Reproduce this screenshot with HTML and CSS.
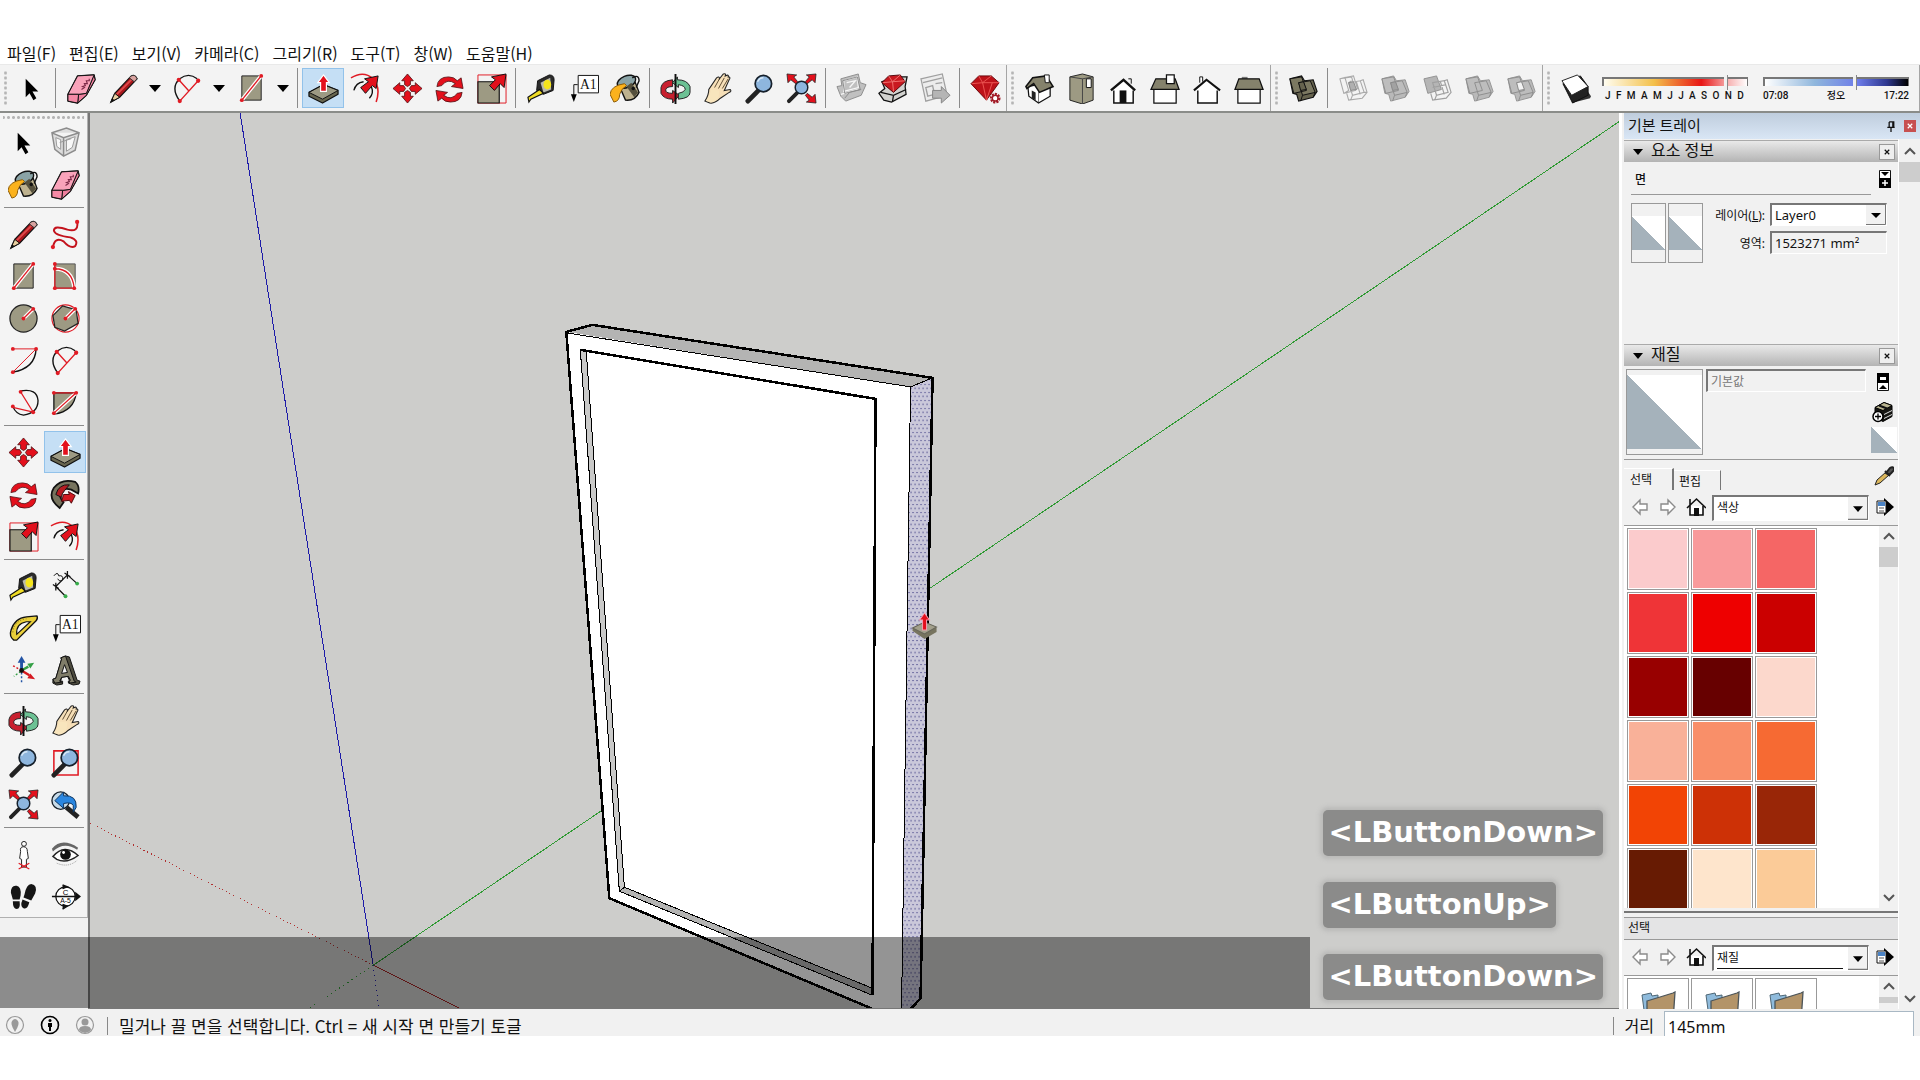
FILE: index.html
```
<!DOCTYPE html>
<html lang="ko">
<head>
  <meta charset="UTF-8">
  <meta name="viewport" content="width=device-width, initial-scale=1.0">
  <title>SketchUp</title>
  <link rel="stylesheet" href="styles.css">
</head>
<body>
  <!-- Shared icons -->
  <svg class="defs" width="0" height="0" aria-hidden="true">
    <defs>
      <pattern id="dots" width="4" height="8" patternUnits="userSpaceOnUse">
        <rect width="4" height="8" fill="#cac8da"/>
        <rect x="0" y="0" width="1" height="1" fill="#1d1b6e"/>
        <rect x="2" y="4" width="1" height="1" fill="#1d1b6e"/>
      </pattern>
      <symbol id="select" viewBox="0 0 32 32"><path d="M10 6v19l4-4 4 7 3-2-4-7h6z" fill="#000"/></symbol>
      <symbol id="eraser" viewBox="0 0 32 32">
        <path d="M2 22 12 3l17-1 1 5-9 16-9 8-10-2z" fill="#f7c0d0" stroke="#111" stroke-width="1.4" stroke-linejoin="round"/>
        <path d="M29 2l1 5-9 16-9 8 1-9 8-1z" fill="#ee7f9d" stroke="#111" stroke-linejoin="round"/>
        <path d="M12 3l17-1-8 19-8 1-11 0z" fill="#f9a3ba" stroke="#111" stroke-linejoin="round"/>
        <path d="M2 22h11l-1 9-10-2z" fill="#f58aa6" stroke="#111" stroke-linejoin="round"/>
        <path d="M16 17l3-2-2-1 3-1-1-2 3 0-1-3 3 0 0-2" fill="none" stroke="#7d2a48" stroke-width="1.2"/>
      </symbol>
      <symbol id="pencil" viewBox="0 0 32 32">
        <path d="M3 30 7 21 24 3q4-2 6 3L12 25z" fill="#a8171c" stroke="#111" stroke-width="1.2"/>
        <path d="M9 22 25 6" stroke="#df4a4c" stroke-width="2"/>
        <path d="M3 30 7 21l5 4z" fill="#e9cfa0" stroke="#111"/><path d="M3 30l1-4 3 2z" fill="#111"/>
        <path d="M24 3q4-2 6 3l-3 3-5-4z" fill="#d9a3a0" stroke="#333"/>
      </symbol>
      <symbol id="arc2" viewBox="0 0 32 32">
        <path d="M8 29Q-2 15 8 6q9-7 18 0" fill="none" stroke="#111" stroke-width="1.4"/>
        <path d="M7 7l10 11M8 29 27 8" stroke="#e01b24" stroke-width="1.4"/>
        <g fill="#e01b24"><circle cx="7" cy="7" r="2.2"/><circle cx="27" cy="8" r="2.2"/><circle cx="8" cy="29" r="2.2"/></g>
      </symbol>
      <symbol id="rect" viewBox="0 0 32 32">
        <path d="M6 3h20v25H6z" fill="#9d9a83" stroke="#222"/>
        <path d="M6 28 26 3" stroke="#fff" stroke-width="4"/><path d="M6 28 26 3" stroke="#e01b24" stroke-width="1.4"/>
        <g fill="#e01b24"><circle cx="26" cy="3" r="2"/><circle cx="6" cy="28" r="2"/></g>
      </symbol>
      <symbol id="pushpull" viewBox="0 0 32 32">
        <path d="M1 20v4l14 7 16-9v-4L16 12z" fill="#68664f" stroke="#111" stroke-width="1.3" stroke-linejoin="round"/>
        <path d="M1 20 16 12l15 6-16 9z" fill="#9d9a83" stroke="#111"/>
        <path d="M16 2l6 8h-3v9h-6v-9h-3z" fill="#e3101c" stroke="#fff" stroke-width="1.2"/>
      </symbol>
      <symbol id="offset" viewBox="0 0 32 32">
        <path d="M1 5Q14-3 24 6q8 9 3 24" fill="none" stroke="#e01b24" stroke-width="1.6"/>
        <path d="M4 18q2-8 10-9M20 26q5-5 2-12" fill="none" stroke="#111" stroke-width="1.4"/>
        <path d="M29 3l-2 13-4-3-7 8-5-6 8-6-4-3z" fill="#e3101c" stroke="#111"/>
      </symbol>
      <symbol id="move" viewBox="0 0 32 32">
        <path id="mv" d="M16 1l6 7h-3v4l-3 2-3-2V8h-3z" fill="#e3101c" stroke="#4a0c10" stroke-width=".8"/>
        <use href="#mv" transform="rotate(90 16 16)"/><use href="#mv" transform="rotate(180 16 16)"/><use href="#mv" transform="rotate(270 16 16)"/>
      </symbol>
      <symbol id="rotate" viewBox="0 0 32 32">
        <path id="rt" d="M3 14Q4 4 15 4q6 0 9 4l4-3 2 11-12-2 4-3q-8-6-14 2z" fill="#e3101c" stroke="#4a0c10" stroke-width=".8"/>
        <use href="#rt" transform="rotate(180 16 17)"/>
      </symbol>
      <symbol id="scale" viewBox="0 0 32 32">
        <path d="M2 2h29v29H2z" fill="none" stroke="#e01b24"/>
        <path d="M2 9h22v22H2z" fill="#9d9a83" stroke="#111" stroke-width="1.2"/>
        <path d="M31 1l-2 14-4-4-6 7-5-5 6-6-4-3z" fill="#e3101c" stroke="#111"/>
      </symbol>
      <symbol id="tape" viewBox="0 0 32 32">
        <path d="M12 8 24 2q5 0 5 5l-1 11-10 4-7-4z" fill="#2b2b2b" stroke="#111"/>
        <path d="M15 10 25 5l1 12-8 3z" fill="#b9b9ae"/><ellipse cx="22" cy="12" rx="4" ry="5" fill="#f5e51c"/>
        <path d="M14 17 2 25l1 5 2-3 13-6z" fill="#f0dc24" stroke="#111" stroke-width="1.2"/>
      </symbol>
      <symbol id="text" viewBox="0 0 32 32">
        <path d="M10.500 2.500h21v18h-21z" fill="#fff" stroke="#111"/><path d="M10 12H6v11" fill="none" stroke="#111"/><path d="M3 22h6l-3 8z" fill="#000"/>
        <text x="21" y="16" font-family="Liberation Serif, serif" font-size="14" text-anchor="middle" fill="#111">A1</text>
      </symbol>
      <symbol id="bucket" viewBox="0 0 32 32">
        <path d="M9 12 25 7l5 13q-4 9-14 8z" fill="#beb28f" stroke="#111" stroke-width="1.4"/>
        <ellipse cx="17" cy="9" rx="10" ry="6" transform="rotate(-22 17 9)" fill="#8aa3a6" stroke="#111" stroke-width="1.5"/>
        <path d="M23 5q7-4 7 3l-3 7" fill="none" stroke="#111" stroke-width="1.4"/>
        <path d="M22 10l7 10-4 5-8-11z" fill="#55503d"/><circle cx="24" cy="16" r="1.800" fill="#111"/>
        <path d="M15 11Q1 13 0 22l4 8q6-1 6-8 1-5 7-9z" fill="#fbb21d" stroke="#8a5a05"/>
      </symbol>
      <symbol id="orbit" viewBox="0 0 32 32">
        <path d="M13 7Q2 8 1 15v6q3 6 12 6v4l7-8-7-5v3q-8 0-7-4 1-3 7-3z" fill="#c8202f" stroke="#222"/>
        <path d="M19 27q12-1 12-7v-6Q28 7 18 7V4l-5 6 6 5v-3q7 1 7 5-1 3-7 4z" fill="#6cc194" stroke="#222"/>
        <path d="M16 1v31" stroke="#111" stroke-width="2"/>
      </symbol>
      <symbol id="hand" viewBox="0 0 32 32">
        <path d="M3 29q4-6 4-12l8-12q3-2 3 1l4-5q3-1 2 2 4-2 3 1 3 0 1 3l-5 11 6-1q2 2-1 3l-9 6q-6 6-11 5z" fill="#f6dfb8" stroke="#222" stroke-width="1.1"/>
        <path d="M13 15l5-9M17 16l6-11M21 16l6-10" stroke="#4b3a22" stroke-width=".9"/><path d="M4 29q5-7 5-12l9 1-1 7q-3 5-8 5z" fill="#f8e5bd"/>
      </symbol>
      <symbol id="zoom" viewBox="0 0 32 32">
        <path d="M4 29l10-10" stroke="#222" stroke-width="5" stroke-linecap="round"/>
        <circle cx="20" cy="11" r="8.500" fill="#8eb6de" stroke="#16202b" stroke-width="1.800"/><path d="M14 9q2-4 6-4" stroke="#d8e8f6" stroke-width="1.5" fill="none"/>
      </symbol>
      <symbol id="extents" viewBox="0 0 32 32">
        <path d="M3 29l9-9" stroke="#222" stroke-width="4" stroke-linecap="round"/>
        <circle cx="16" cy="15" r="6.500" fill="#8eb6de" stroke="#16202b" stroke-width="1.5"/>
        <path d="M1 1l10 1-3 2 4 5-2 2-5-4-3 3zM31 1l-10 1 3 2-4 5 2 2 5-4 3 3zM31 31l-10-1 3-2-4-5 2-2 5 4 3-3z" fill="#e3101c" stroke="#222" stroke-width=".8"/>
      </symbol>
      <symbol id="warehouse" viewBox="0 0 32 32">
        <path d="M1 14l5-1-1-7 18-5 2 9 6 2-5 11-16 6-5-5z" fill="#c0c0c0" stroke="#8d8d8d"/>
        <path d="M8 8l14-4 1 11-15 4zM5 22l18-5M11 10l9-2-6 7" fill="none" stroke="#f6f6f6" stroke-width="1.300"/><path d="M7 8l15-4 3 13-16 4zM9 26l5-6 12-3" fill="none" stroke="#8a8a8a"/>
      </symbol>
      <symbol id="rubybox" viewBox="0 0 32 32">
        <path d="M1 21l6-5-3-7 18-5 8 0-2 10 1 8-15 8-8-2z" fill="#d2d2cf" stroke="#111" stroke-width="1.3"/>
        <path d="M3 20l13 3 13-6M16 23l-1 6" stroke="#111" fill="none" stroke-width="1.300"/>
        <path d="M4 10l7-7 12-1 5 7-12 11z" fill="#c91920" stroke="#53080c"/><path d="M5 10l10-1 13-1M11 3l4 6 8-7M15 9l1 10" fill="none" stroke="#f0736f"/>
      </symbol>
      <symbol id="share" viewBox="0 0 32 32">
        <path d="M1 6l22-5 5 22-22 6z" fill="#ececec" stroke="#a0a0a0" stroke-width="1.3"/><path d="M3 10l20-5M6 15l7-2 2 9-7 2zM16 11l7-1" fill="none" stroke="#a0a0a0" stroke-width="1.400"/>
        <path d="M13 18h9v-4l9 9-9 8v-5h-9z" fill="#b5b5b5" stroke="#858585"/>
      </symbol>
      <symbol id="ruby" viewBox="0 0 32 32">
        <path d="M1 11 9 3h13l8 7-13 18z" fill="#bd1219" stroke="#6b070b"/><path d="M2 11l11-1 17 0M9 3l4 7 9-7M13 10l4 18 6-18" fill="none" stroke="#ec5653"/>
        <circle cx="26" cy="26" r="4" fill="#fff" stroke="#a21b27" stroke-width="3" stroke-dasharray="2 1"/><circle cx="26" cy="26" r="3" fill="none" stroke="#a21b27" stroke-width="1.500"/>
      </symbol>
      <symbol id="iso" viewBox="0 0 32 32">
        <path d="M4 14l10-2 13-1v13l-12 7-10-7z" fill="#fff" stroke="#111" stroke-width="1.3"/><path d="M15 19v11" stroke="#777"/>
        <path d="M2 14 9 5l14-2 7 11-14 6-6-9-7 5z" fill="#85826c" stroke="#111" stroke-width="1.600"/><path d="M8 18l4 2v8l-4-2z" fill="#222"/><path d="M21 2h5v8h-4z" fill="#fff" stroke="#111"/>
      </symbol>
      <symbol id="top" viewBox="0 0 32 32">
        <path d="M4 4l13-3 11 3v24l-11 4L4 28z" fill="#9d9a83" stroke="#222"/><path d="M17 6v26M4 4l13 2 11-2" stroke="#444" fill="none"/><path d="M21 6h5v9h-5z" fill="#fff" stroke="#111"/>
      </symbol>
      <symbol id="front" viewBox="0 0 32 32"><path d="M6 16v15h20V16" fill="#fff" stroke="#111" stroke-width="1.500"/><path d="M21 6h3v5" fill="none" stroke="#111"/><path d="M3 18 16 7l12 11" fill="#fff" stroke="#111" stroke-width="2.500"/><path d="M12 18h7v13h-7z" fill="#111"/></symbol>
      <symbol id="right" viewBox="0 0 32 32"><path d="M4 16h23v15H4z" fill="#fff" stroke="#111" stroke-width="1.300"/><path d="M6 6h20l4 11H1z" fill="#85826c" stroke="#111" stroke-width="1.300"/><path d="M17 2h8v9h-8z" fill="#fff" stroke="#111" stroke-width="1.300"/></symbol>
      <symbol id="back" viewBox="0 0 32 32"><path d="M6 16v15h20V16" fill="#fff" stroke="#111" stroke-width="1.500"/><path d="M8 10V4h3v5" fill="#fff" stroke="#111"/><path d="M2 18 15 7l14 11" fill="#fff" stroke="#111" stroke-width="2.200"/></symbol>
      <symbol id="left" viewBox="0 0 32 32"><path d="M4 16h23v15H4z" fill="#fff" stroke="#111" stroke-width="1.300"/><path d="M8 4h6v3H8z" fill="#777"/><path d="M5 6h21l4 11H1z" fill="#85826c" stroke="#111" stroke-width="1.300"/></symbol>
      <symbol id="solid" viewBox="0 0 32 32">
        <path d="M2 6l12-3 3 5 9-1 4 12-4 6-15 4-2-7-4-1z" fill="#66634e" stroke="#111" stroke-width="1.200"/>
        <path d="M2 6l12-2 5 14-13 3zM11 10l12-2 5 12-13 3zM15 23l-2 6M28 20l-2 5" fill="#7b7861" stroke="#111"/><path d="M11 10l5-1 3 8-6 1z" fill="#66634e" stroke="#111"/>
      </symbol>
      <symbol id="shell" viewBox="0 0 32 32">
        <path d="M2 6l12-3 3 5 9-1 4 12-4 6-15 4-2-7-4-1z" fill="#b9b9b9" stroke="#969696"/>
        <path d="M2 6l12-2 5 14-13 3zM11 10l12-2 5 12-13 3zM15 23l-2 6M28 20l-2 5" fill="#bdbdbd" stroke="#8d8d8d"/>
      </symbol>
      <symbol id="union" viewBox="0 0 32 32"><use href="#shell"/><path d="M11 10l5-1 3 8-6 1z" fill="#a2a2a2" stroke="#8a8a8a"/></symbol>
      <symbol id="trim" viewBox="0 0 32 32"><use href="#shell"/><path d="M11 10l5-1 3 8-6 1z" fill="#f3f3f3" stroke="#8a8a8a"/></symbol>
      <symbol id="wire" viewBox="0 0 32 32"><path d="M2 6l12-2 4 14-12 3zM2 6l4-1 10-2 4 13-2 2M7 4l4 14-5 3M11 10l12-2 4 12-12 3zM11 10l3-2M23 8l3-1 4 13-5 6-14 2-2-7M27 20l3 0M15 23l-2 5M19 9l4 13" fill="none" stroke="#a9a9a9" stroke-width="1.100"/><path d="M11 10l5-1 3 8-6 1z" fill="#b0b0b0" stroke="#888"/></symbol>
      <symbol id="subtract" viewBox="0 0 32 32"><path d="M2 6l13-3 5 14-14 4z" fill="#b5b5b5" stroke="#929292"/><path d="M11 10l12-2 4 12-12 3zM23 8l3-1 4 13-5 6-14 2-2-7M15 23l-2 5M19 9l4 13M11 15l14-3" fill="none" stroke="#a0a0a0" stroke-width="1.200"/></symbol>
      <symbol id="shadow" viewBox="0 0 32 32"><path d="M12 31l19-5 1-2-4-6z" fill="#333"/><path d="M3 11l18-8 8 11v9L13 31z" fill="#222" stroke="#111"/><path d="M2 8 18 2l11 12-17 9z" fill="#fff" stroke="#222"/></symbol>
      <symbol id="component" viewBox="0 0 32 32"><path d="M2 6l15-5 13 5-4 18-12 6-9-7zM2 6l12 5 16-5M14 11v19" fill="#ddd" stroke="#8c8c8c" stroke-width="1.500"/><path d="M6 11l5 2v10l-4-3zM17 13l9-3-3 11-6 4zM10 16l12-4" fill="#f8f8f8" stroke="#999"/></symbol>
      <symbol id="freehand" viewBox="0 0 32 32"><path d="M3 29Q5 18 14 23q7 8 12 5 4-6-5-9-16-2-17-7 0-6 14-1 12 3 10-8" fill="none" stroke="#c3121c" stroke-width="2"/><circle cx="3" cy="29" r="2.200" fill="#e01b24"/><circle cx="28" cy="3" r="2.200" fill="#e01b24"/></symbol>
      <symbol id="rotrect" viewBox="0 0 32 32"><path d="M5 3h21v25H5z" fill="#9d9a83" stroke="#555"/><path d="M5 8q18 0 20 20" fill="none" stroke="#fff" stroke-width="4"/><path d="M5 3v25h20Q23 8 5 8" fill="none" stroke="#e01b24" stroke-width="1.300"/><g fill="#e01b24"><circle cx="5" cy="3" r="2"/><circle cx="5" cy="8" r="2"/><circle cx="5" cy="28" r="2"/><circle cx="25" cy="28" r="2"/></g></symbol>
      <symbol id="circle" viewBox="0 0 32 32"><circle cx="16" cy="16" r="14" fill="#9d9a83" stroke="#222" stroke-width="1.300"/><path d="M16 16l10-10" stroke="#fff" stroke-width="4"/><path d="M16 16l10-10" stroke="#e01b24" stroke-width="1.300"/><g fill="#e01b24"><circle cx="16" cy="16" r="2"/><circle cx="26" cy="6" r="2"/></g></symbol>
      <symbol id="polygon" viewBox="0 0 32 32"><circle cx="16" cy="16" r="14" fill="#fff" stroke="#e01b24" stroke-width="1.200"/><path d="M3 13 13 3l14 4 2 14-14 8-10-4z" fill="#9d9a83" stroke="#222" stroke-width="1.300"/><path d="M16 16l10-10" stroke="#fff" stroke-width="4"/><path d="M16 16l10-10" stroke="#e01b24" stroke-width="1.300"/><g fill="#e01b24"><circle cx="16" cy="16" r="2"/><circle cx="26" cy="6" r="2"/></g></symbol>
      <symbol id="arc" viewBox="0 0 32 32"><path d="M29 4q-1 20-24 24" fill="none" stroke="#111" stroke-width="1.400"/><path d="M5 28 29 4H5" fill="none" stroke="#e01b24"/><g fill="#e01b24"><circle cx="5" cy="4" r="2"/><circle cx="29" cy="4" r="2"/><circle cx="5" cy="28" r="2"/></g></symbol>
      <symbol id="arc3" viewBox="0 0 32 32"><path d="M13 4q17-3 18 10 0 13-15 15-8-1-11-9" fill="none" stroke="#111" stroke-width="1.400"/><path d="M13 5l13 21-21-5" fill="none" stroke="#e01b24" stroke-width="1.200"/><g fill="#e01b24"><circle cx="13" cy="5" r="2"/><circle cx="26" cy="26" r="2"/><circle cx="5" cy="20" r="2"/></g></symbol>
      <symbol id="pie" viewBox="0 0 32 32"><path d="M4 6h23q-2 19-23 22z" fill="#9d9a83" stroke="#111" stroke-width="1.300"/><path d="M4 27 27 6" stroke="#fff" stroke-width="4"/><path d="M4 27 27 6H4" fill="none" stroke="#e01b24" stroke-width="1.300"/><g fill="#e01b24"><circle cx="4" cy="6" r="2"/><circle cx="27" cy="6" r="2"/><circle cx="4" cy="27" r="2"/></g></symbol>
      <symbol id="followme" viewBox="0 0 32 32"><path d="M10 30Q-3 20 4 9 12-1 26 3q5 4 3 12l-7-4Q13 8 10 15q0 5 4 9z" fill="#77745f" stroke="#111" stroke-width="1.800"/><path d="M6 16Q9 5 20 6l-5 6q-3 3-3 7z" fill="#b51c22" stroke="#111"/><path d="M12 23l2-7 6 0-1-3 7 4-4 8-2-3z" fill="#d01a22" stroke="#51070a"/></symbol>
      <symbol id="dimension" viewBox="0 0 32 32"><path d="M6 16 18 4M6 16l10 10M18 4l10 9M3 14l6 4M6 12v8M15 2l6 4M18 0v8" stroke="#111" stroke-width="1.300"/><path d="M4 5q4-5 5 0 5-1 4 4-3 3-5-1" fill="none" stroke="#111"/><circle cx="16" cy="26" r="2" fill="#38ad4b"/><circle cx="28" cy="13" r="2" fill="#38ad4b"/></symbol>
      <symbol id="protractor" viewBox="0 0 32 32">
        <path d="M6 28Q1 24 3 18 7 5 19 4l11-1q1 3-1 5L9 28z" fill="#e9cf3a" stroke="#111" stroke-width="1.400" stroke-linejoin="round"/>
        <path d="M9 22q-1-11 10-13l4 0z" fill="#f6f6f6" stroke="#111" stroke-width="1.200"/><path d="M5 20q1-12 14-14" fill="none" stroke="#7a6a12" stroke-dasharray="1 2"/>
      </symbol>
      <symbol id="axes" viewBox="0 0 32 32"><path d="M14 16V6" stroke="#2253a5" stroke-width="3"/><path d="M14 1l4 7h-8z" fill="#2253a5"/><path d="M14 16l7-4" stroke="#34a046" stroke-width="2.500"/><path d="M27 8l-7 1 3 5z" fill="#34a046"/><path d="M14 16l8 5" stroke="#d51820" stroke-width="2.500"/><path d="M28 25l-8-1 3-5z" fill="#d51820"/><path d="M14 18v10" stroke="#2253a5" stroke-width="1.500" stroke-dasharray="2 2"/><path d="M14 16 5 11" stroke="#d51820" stroke-width="1.500" stroke-dasharray="2 2"/><path d="M13 17l-7 5" stroke="#34a046" stroke-width="1.500" stroke-dasharray="2 2"/><circle cx="14" cy="16" r="2.500" fill="#111"/></symbol>
      <symbol id="text3d" viewBox="0 0 32 32">
        <path d="M3 25l3-1L12 4l-1-1 5-2 4 1 8 24 3 1-1 3-6 1-5-2v-2l1-1-2-4-6 1-1 4 2 0v3l-6 1-4-2z" fill="#4d4b3e" stroke="#111"/>
        <path d="M3 25l3-1L12 4l-1-1 5-2 9 26 2 1-7 1v-2l1-1-2-4-7 1-2 4 2 1-7 1z" fill="#807d69" stroke="#111"/><path d="M12 19l3-9 3 8z" fill="#eee" stroke="#111"/>
      </symbol>
      <symbol id="window" viewBox="0 0 32 32"><path d="M4 4h25v25H4z" fill="none" stroke="#e01b24" stroke-width="1.600"/><use href="#zoom"/></symbol>
      <symbol id="previous" viewBox="0 0 32 32"><path d="M17 19l12 10" stroke="#222" stroke-width="5"/><circle cx="11" cy="12" r="9" fill="#c7dbe9" stroke="#16202b" stroke-width="1.400"/><path d="M5 12 14 3v4q14-1 13 12l-3 5 0-7q-2-4-10-2v5z" fill="#2a86e0" stroke="#10355e"/></symbol>
      <symbol id="camera" viewBox="0 0 32 32"><path d="M13 13q-1-5 3-5t4 5l1 7-2 1v8h-5v-8l-2-1z" fill="#fff" stroke="#222"/><circle cx="16.500" cy="5" r="2.500" fill="#fff" stroke="#222"/><path d="M11 25l11 6M22 25l-11 6" stroke="#e01b24" stroke-width="1.300"/></symbol>
      <symbol id="look" viewBox="0 0 32 32"><path d="M2 10Q12-2 29 9l-1 2Q14 2 3 13z" fill="#666"/><path d="M3 18q12-14 26-1-12 9-22 4z" fill="#fff" stroke="#222" stroke-width="1.500"/><circle cx="16" cy="16" r="5.500" fill="#111"/><circle cx="14" cy="14" r="1.500" fill="#fff"/><path d="M7 25q12 5 21-3" fill="none" stroke="#999" stroke-dasharray="1 1"/></symbol>
      <symbol id="walk" viewBox="0 0 32 32"><g fill="#151515"><path d="M3 12q0-8 6-7 5 1 4 10l-1 4-7 0zM5 21l7 0q1 8-3 8t-4-8z"/><path d="M17 14q2-11 7-11 7 1 4 10l-4 7-8-3zM15 19l7 3q-2 8-6 6t-1-9z"/></g></symbol>
      <symbol id="section" viewBox="0 0 32 32"><circle cx="16" cy="16" r="10" fill="#fff" stroke="#111" stroke-width="1.300"/><path d="M2 16h28M13 4l5 2-5 2M13 24l5 2-5 3" stroke="#111" stroke-width="1.300" fill="#111"/><path d="M26 11l6 5-6 5z" fill="#111"/><text x="16" y="14" font-family="Liberation Sans, sans-serif" font-size="8" text-anchor="middle">C</text><text x="16" y="23" font-family="Liberation Sans, sans-serif" font-size="7" text-anchor="middle">A-5</text></symbol>
      <symbol id="prev" viewBox="0 0 20 20"><path d="M3 10l7-7v4h7v6h-7v4z" fill="#fff" stroke="#8b8b8b" stroke-width="1.400"/></symbol>
      <symbol id="next" viewBox="0 0 20 20"><path d="M17 10l-7-7v4H3v6h7v4z" fill="#fff" stroke="#8b8b8b" stroke-width="1.400"/></symbol>
      <symbol id="home" viewBox="0 0 20 20"><path d="M4 9v9h13V9" fill="#fff" stroke="#111" stroke-width="1.600"/><path d="M4 9V2M1 11 10.500 2 20 11" fill="none" stroke="#111" stroke-width="1.600"/><path d="M8 11h5v8H8z" fill="#111"/></symbol>
      <symbol id="details" viewBox="0 0 20 20"><path d="M9 1l10 9-10 9z" fill="#000"/><path d="M2 4h9v12H2z" fill="#fff" stroke="#111"/><path d="M3 5h7v4H3z" fill="#4b83c5"/><path d="M4 11h5M4 14h5" stroke="#555"/></symbol>
      <symbol id="up" viewBox="0 0 12 8"><path d="M1 7l5-5 5 5" fill="none" stroke="#555" stroke-width="2"/></symbol>
      <symbol id="down" viewBox="0 0 12 8"><path d="M1 1l5 5 5-5" fill="none" stroke="#555" stroke-width="2"/></symbol>
      <symbol id="caret" viewBox="0 0 12 7"><path d="M0 0h12L6 7z" fill="#000"/></symbol>
      <symbol id="close" viewBox="0 0 8 8"><path d="M1 1l6 6M7 1 1 7" stroke="currentColor" stroke-width="1.600"/></symbol>
      <symbol id="folder" viewBox="0 0 36 36"><path d="M1 4l9-2 1 3 6-1v30H5z" fill="#8fbbdc" stroke="#4d6675"/><path d="M6 10 32 2l2-1-2 30-26 4z" fill="#b39469" stroke="#4c555a" stroke-width="1.300"/></symbol>
    </defs>
  </svg>

  <nav class="menubar" aria-label="메뉴">
    <button>파일(F)</button>
    <button>편집(E)</button>
    <button>보기(V)</button>
    <button>카메라(C)</button>
    <button>그리기(R)</button>
    <button>도구(T)</button>
    <button>창(W)</button>
    <button>도움말(H)</button>
  </nav>

  <div class="toolbar">
    <div class="group">
      <span class="grip"></span>
      <button class="tool" aria-label="선택"><svg><use href="#select"/></svg></button>
      <span class="sep"></span>
      <button class="tool" aria-label="지우개"><svg><use href="#eraser"/></svg></button>
      <button class="tool" aria-label="선"><svg><use href="#pencil"/></svg></button>
      <button class="more" aria-label="선 도구"><svg><use href="#caret"/></svg></button>
      <button class="tool" aria-label="2점 호"><svg><use href="#arc2"/></svg></button>
      <button class="more" aria-label="호 도구"><svg><use href="#caret"/></svg></button>
      <button class="tool" aria-label="직사각형"><svg><use href="#rect"/></svg></button>
      <button class="more" aria-label="도형 도구"><svg><use href="#caret"/></svg></button>
      <span class="sep"></span>
      <button class="tool active" aria-label="밀기/끌기"><svg><use href="#pushpull"/></svg></button>
      <button class="tool" aria-label="오프셋"><svg><use href="#offset"/></svg></button>
      <button class="tool" aria-label="이동"><svg><use href="#move"/></svg></button>
      <button class="tool" aria-label="회전"><svg><use href="#rotate"/></svg></button>
      <button class="tool" aria-label="배율"><svg><use href="#scale"/></svg></button>
      <span class="sep"></span>
      <button class="tool" aria-label="줄자"><svg><use href="#tape"/></svg></button>
      <button class="tool" aria-label="텍스트"><svg><use href="#text"/></svg></button>
      <button class="tool" aria-label="페인트통"><svg><use href="#bucket"/></svg></button>
      <span class="sep"></span>
      <button class="tool" aria-label="궤도"><svg><use href="#orbit"/></svg></button>
      <button class="tool" aria-label="팬"><svg><use href="#hand"/></svg></button>
      <button class="tool" aria-label="확대/축소"><svg><use href="#zoom"/></svg></button>
      <button class="tool" aria-label="범위 확대"><svg><use href="#extents"/></svg></button>
      <span class="sep"></span>
      <button class="tool" aria-label="모델 가져오기"><svg><use href="#warehouse"/></svg></button>
      <button class="tool" aria-label="3D Warehouse"><svg><use href="#rubybox"/></svg></button>
      <button class="tool" aria-label="모델 공유"><svg><use href="#share"/></svg></button>
      <span class="sep"></span>
      <button class="tool" aria-label="확장 프로그램"><svg><use href="#ruby"/></svg></button>
    </div>
    <div class="group">
      <span class="grip"></span>
      <button class="tool" aria-label="등각"><svg><use href="#iso"/></svg></button>
      <button class="tool" aria-label="평면"><svg><use href="#top"/></svg></button>
      <button class="tool" aria-label="정면"><svg><use href="#front"/></svg></button>
      <button class="tool" aria-label="우측"><svg><use href="#right"/></svg></button>
      <button class="tool" aria-label="후면"><svg><use href="#back"/></svg></button>
      <button class="tool" aria-label="좌측"><svg><use href="#left"/></svg></button>
    </div>
    <div class="group">
      <span class="grip"></span>
      <button class="tool" aria-label="외부 쉘"><svg><use href="#solid"/></svg></button>
      <span class="sep"></span>
      <button class="tool" aria-label="교차"><svg><use href="#wire"/></svg></button>
      <button class="tool" aria-label="결합"><svg><use href="#union"/></svg></button>
      <button class="tool" aria-label="빼기"><svg><use href="#subtract"/></svg></button>
      <button class="tool" aria-label="자르기"><svg><use href="#shell"/></svg></button>
      <button class="tool" aria-label="분할"><svg><use href="#trim"/></svg></button>
    </div>
    <div class="group grow">
      <span class="grip"></span>
      <button class="tool" aria-label="그림자"><svg><use href="#shadow"/></svg></button>
      <div class="slider">
        <input type="range" class="months" aria-label="날짜" min="0" max="100" value="86">
        <div class="scale letters"><span>J</span><span>F</span><span>M</span><span>A</span><span>M</span><span>J</span><span>J</span><span>A</span><span>S</span><span>O</span><span>N</span><span>D</span></div>
      </div>
      <div class="slider">
        <input type="range" class="hours" aria-label="시간" min="0" max="100" value="63">
        <div class="scale"><span>07:08</span><span>정오</span><span>17:22</span></div>
      </div>
    </div>
  </div>

  <main>
    <aside class="palette">
      <div class="palette-box">
        <span class="grip-h"></span>
        <div class="tools">
          <button class="tool" aria-label="선택"><svg><use href="#select"/></svg></button>
          <button class="tool" aria-label="구성요소"><svg><use href="#component"/></svg></button>
          <button class="tool" aria-label="페인트통"><svg><use href="#bucket"/></svg></button>
          <button class="tool" aria-label="지우개"><svg><use href="#eraser"/></svg></button>
        </div>
        <div class="tools">
          <button class="tool" aria-label="선"><svg><use href="#pencil"/></svg></button>
          <button class="tool" aria-label="자유곡선"><svg><use href="#freehand"/></svg></button>
          <button class="tool" aria-label="직사각형"><svg><use href="#rect"/></svg></button>
          <button class="tool" aria-label="회전 직사각형"><svg><use href="#rotrect"/></svg></button>
          <button class="tool" aria-label="원"><svg><use href="#circle"/></svg></button>
          <button class="tool" aria-label="다각형"><svg><use href="#polygon"/></svg></button>
          <button class="tool" aria-label="호"><svg><use href="#arc"/></svg></button>
          <button class="tool" aria-label="2점 호"><svg><use href="#arc2"/></svg></button>
          <button class="tool" aria-label="3점 호"><svg><use href="#arc3"/></svg></button>
          <button class="tool" aria-label="파이"><svg><use href="#pie"/></svg></button>
        </div>
        <div class="tools">
          <button class="tool" aria-label="이동"><svg><use href="#move"/></svg></button>
          <button class="tool active" aria-label="밀기/끌기"><svg><use href="#pushpull"/></svg></button>
          <button class="tool" aria-label="회전"><svg><use href="#rotate"/></svg></button>
          <button class="tool" aria-label="따라가기"><svg><use href="#followme"/></svg></button>
          <button class="tool" aria-label="배율"><svg><use href="#scale"/></svg></button>
          <button class="tool" aria-label="오프셋"><svg><use href="#offset"/></svg></button>
        </div>
        <div class="tools">
          <button class="tool" aria-label="줄자"><svg><use href="#tape"/></svg></button>
          <button class="tool" aria-label="치수"><svg><use href="#dimension"/></svg></button>
          <button class="tool" aria-label="각도기"><svg><use href="#protractor"/></svg></button>
          <button class="tool" aria-label="텍스트"><svg><use href="#text"/></svg></button>
          <button class="tool" aria-label="축"><svg><use href="#axes"/></svg></button>
          <button class="tool" aria-label="3D 텍스트"><svg><use href="#text3d"/></svg></button>
        </div>
        <div class="tools">
          <button class="tool" aria-label="궤도"><svg><use href="#orbit"/></svg></button>
          <button class="tool" aria-label="팬"><svg><use href="#hand"/></svg></button>
          <button class="tool" aria-label="확대/축소"><svg><use href="#zoom"/></svg></button>
          <button class="tool" aria-label="창 확대"><svg><use href="#window"/></svg></button>
          <button class="tool" aria-label="범위 확대"><svg><use href="#extents"/></svg></button>
          <button class="tool" aria-label="이전"><svg><use href="#previous"/></svg></button>
        </div>
        <div class="tools">
          <button class="tool" aria-label="카메라 배치"><svg><use href="#camera"/></svg></button>
          <button class="tool" aria-label="둘러보기"><svg><use href="#look"/></svg></button>
          <button class="tool" aria-label="이동 보기"><svg><use href="#walk"/></svg></button>
          <button class="tool" aria-label="단면"><svg><use href="#section"/></svg></button>
        </div>
      </div>
    </aside>

    <section class="viewport">
      <svg class="scene" viewBox="90 113 1528 895" preserveAspectRatio="xMidYMid slice" shape-rendering="crispEdges">
        <!-- Axes -->
        <g fill="none" stroke-width="1">
          <path d="M240 113 373 965" stroke="#1d1aa8"/>
          <path d="M373 965 1618 122" stroke="#2f9a33"/>
          <path d="M373 965l88 44" stroke="#a32626"/>
          <path d="M90 823 373 965" stroke="#b03030" stroke-dasharray="1 3"/>
          <path d="M373 965l-65 44" stroke="#2f9a33" stroke-dasharray="1 4"/>
          <path d="M373 965l6 44" stroke="#2320a8" stroke-dasharray="1 4"/>
        </g>
        <!-- Door frame -->
        <path d="M566 332 910 387 901 1020H902L609 898z" fill="#fff"/>
        <path d="M566 332 592 325 932 378 910 387z" fill="#b4b4b3"/>
        <path d="M910 387 932 378 920 998 908 1012H901z" fill="url(#dots)"/>
        <path d="M580 350 586 352 624 887 619 891z" fill="#c9c9c8"/>
        <path d="M624 887 872 988V995L619 891z" fill="#b4b4b3"/>
        <g fill="none" stroke="#000" stroke-width="1">
          <path d="M566 333 910 387 901 1010M910 387l22-9M580 350l39 541M586 352l38 535M619 891l5-4 248 101M619 891l253 104"/>
        </g>
        <g fill="none" stroke="#000" stroke-width="2.500" stroke-linejoin="round">
          <path d="M873 1009 609 898 566 332l26-7L932 378l-12 620-10 11M580 350 875 399 872 995"/>
        </g>
        <!-- Push/pull cursor -->
        <g shape-rendering="auto">
          <path d="M912 628v3l12 8 12-7v-4l-12-5z" fill="#77745f"/>
          <path d="M912 628l12-6 12 5-12 7z" fill="#a3a08c" stroke="#68665a"/>
          <path d="M924 613l5 7h-3v10h-4v-10h-3z" fill="#e3101c" stroke="#f0a0b0"/>
        </g>
      </svg>
      <div class="keys">
        <kbd>&lt;LButtonDown&gt;</kbd>
        <kbd>&lt;LButtonUp&gt;</kbd>
        <kbd>&lt;LButtonDown&gt;</kbd>
      </div>
    </section>

    <aside class="tray">
      <header class="tray-title">
        <h1>기본 트레이</h1>
        <button class="pin" aria-label="고정"><svg viewBox="0 0 10 12"><path d="M3 1h5v6M3 1v6M1 7h8M5 7v5M7 1v6" stroke="#111" stroke-width="1.400" fill="none"/></svg></button>
        <button class="tray-close" aria-label="트레이 닫기"><svg><use href="#close"/></svg></button>
      </header>
      <div class="tray-body">
        <div class="panels">
          <header class="panel-head">
            <svg><use href="#caret"/></svg>
            <h2>요소 정보</h2>
            <button aria-label="요소 정보 닫기"><svg><use href="#close"/></svg></button>
          </header>
          <div class="entity">
            <div class="entity-top">
              <strong>면</strong>
              <svg viewBox="0 0 12 18"><path d="M.5.5h11v17H.5z" fill="#fff" stroke="#111"/><path d="M2 2h8L6 6zM0 8h12v10H0z" fill="#000"/><path d="M3 13h6M6 10v6" stroke="#fff" stroke-width="1.500"/></svg>
            </div>
            <div class="entity-row">
              <span class="face"></span>
              <span class="face"></span>
              <div class="fields">
                <label for="layer">레이어(<u>L</u>):</label>
                <select id="layer"><option>Layer0</option></select>
                <label for="area">영역:</label>
                <input id="area" type="text" value="1523271 mm²" readonly>
              </div>
            </div>
          </div>

          <header class="panel-head">
            <svg><use href="#caret"/></svg>
            <h2>재질</h2>
            <button aria-label="재질 닫기"><svg><use href="#close"/></svg></button>
          </header>
          <div class="material">
            <span class="preview"></span>
            <input type="text" aria-label="재질 이름" value="기본값" disabled>
            <div class="material-tools">
              <svg class="collapse" viewBox="0 0 12 18"><path d="M.5.5h11v17H.5z" fill="#fff" stroke="#111"/><path d="M0 0h12v10H0zM2 16h8l-4-4z" fill="#000"/><path d="M3 4h6v3H3z" fill="#fff"/></svg>
              <button aria-label="재질 만들기"><svg viewBox="0 0 22 22"><path d="M4 7l9-5 8 3v11l-9 5-8-4z" fill="#171713" stroke="#000"/><path d="M4 7l9-5 8 3-9 5z" fill="#b9b490" stroke="#000"/><path d="M13 14l8-4M13 18l8-4" stroke="#ddd"/><path d="M8 5l8 3" stroke="#111" stroke-width="2"/><circle cx="7" cy="16" r="5" fill="#fff" stroke="#000" stroke-width="1.500"/><path d="M4 16h6M7 13v6" stroke="#000" stroke-width="1.300"/></svg></button>
              <span class="mini"></span>
            </div>
          </div>
          <div class="tabs" role="tablist">
            <button role="tab" aria-selected="true">선택</button>
            <button role="tab" aria-selected="false">편집</button>
            <svg viewBox="0 0 20 20"><path d="M1 19l2-5L12 6l3 3-9 8z" fill="#dcb75c" stroke="#222"/><path d="M11 5l5 5M12 7l4-5q3-2 4 1 0 2-5 6z" stroke="#222" stroke-width="2" fill="#555"/></svg>
          </div>
          <div class="nav">
            <button aria-label="이전"><svg><use href="#prev"/></svg></button>
            <button aria-label="다음"><svg><use href="#next"/></svg></button>
            <button aria-label="홈"><svg><use href="#home"/></svg></button>
            <select aria-label="재질 목록"><option>색상</option></select>
            <button aria-label="세부정보"><svg><use href="#details"/></svg></button>
          </div>
          <div class="list colors">
            <div class="grid">
              <button class="swatch c1" aria-label="색상 1"></button>
              <button class="swatch c2" aria-label="색상 2"></button>
              <button class="swatch c3" aria-label="색상 3"></button>
              <button class="swatch c4" aria-label="색상 4"></button>
              <button class="swatch c5" aria-label="색상 5"></button>
              <button class="swatch c6" aria-label="색상 6"></button>
              <button class="swatch c7" aria-label="색상 7"></button>
              <button class="swatch c8" aria-label="색상 8"></button>
              <button class="swatch c9" aria-label="색상 9"></button>
              <button class="swatch c10" aria-label="색상 10"></button>
              <button class="swatch c11" aria-label="색상 11"></button>
              <button class="swatch c12" aria-label="색상 12"></button>
              <button class="swatch c13" aria-label="색상 13"></button>
              <button class="swatch c14" aria-label="색상 14"></button>
              <button class="swatch c15" aria-label="색상 15"></button>
              <button class="swatch c16" aria-label="색상 16"></button>
              <button class="swatch c17" aria-label="색상 17"></button>
              <button class="swatch c18" aria-label="색상 18"></button>
            </div>
            <div class="scroll"><svg><use href="#up"/></svg><span></span><svg><use href="#down"/></svg></div>
          </div>
          <div class="splitter"></div>
          <h3>선택</h3>
          <div class="nav">
            <button aria-label="이전"><svg><use href="#prev"/></svg></button>
            <button aria-label="다음"><svg><use href="#next"/></svg></button>
            <button aria-label="홈"><svg><use href="#home"/></svg></button>
            <select class="lined" aria-label="재질 폴더"><option>재질</option></select>
            <button aria-label="세부정보"><svg><use href="#details"/></svg></button>
          </div>
          <div class="list folders">
            <div class="grid">
              <button class="swatch" aria-label="폴더 1"><svg><use href="#folder"/></svg></button>
              <button class="swatch" aria-label="폴더 2"><svg><use href="#folder"/></svg></button>
              <button class="swatch" aria-label="폴더 3"><svg><use href="#folder"/></svg></button>
            </div>
            <div class="scroll"><svg><use href="#up"/></svg><span></span></div>
          </div>
        </div>
        <div class="scroll outer"><svg><use href="#up"/></svg><span></span><svg><use href="#down"/></svg></div>
      </div>
    </aside>

    <div class="shade"></div>
  </main>

  <footer class="status">
    <button aria-label="위치"><svg viewBox="0 0 20 20"><circle cx="10" cy="10" r="8.500" fill="none" stroke="#999" stroke-width="1.200"/><path d="M10 17Q5 9 7 6q3-4 6 0 2 3-3 11z" fill="#999"/></svg></button>
    <button aria-label="크레딧"><svg viewBox="0 0 20 20"><circle cx="10" cy="10" r="8.500" fill="none" stroke="#000" stroke-width="1.600"/><circle cx="10" cy="5.500" r="1.500"/><path d="M8 8h4v4h-1v4H9v-4H8z"/></svg></button>
    <button aria-label="로그인"><svg viewBox="0 0 20 20"><circle cx="10" cy="10" r="8.500" fill="none" stroke="#999" stroke-width="1.200"/><circle cx="10" cy="7" r="3.500" fill="#999"/><path d="M4 15q0-4 6-4t6 4q-6 6-12 0z" fill="#999"/></svg></button>
    <p>밀거나 끌 면을 선택합니다. Ctrl = 새 시작 면 만들기 토글</p>
    <label for="distance">거리</label>
    <input id="distance" type="text" value="145mm">
  </footer>
</body>
</html>
```
FILE: styles.css
```
* {
  box-sizing: border-box;
}
html,
body {
  height: 100%;
}
body {
  margin: 0;
  padding: 40px 0 44px;
  display: flex;
  flex-direction: column;
  overflow: hidden;
  background: #fff;
  color: #111;
  font-family: "Noto Sans", "Noto Sans CJK KR", sans-serif;
  font-size: 13px;
}
h1,
h2,
h3,
p {
  margin: 0;
  font-weight: normal;
}
button {
  margin: 0;
  padding: 0;
  border: 0;
  background: none;
  color: inherit;
  font: inherit;
}
svg {
  display: block;
}
.defs {
  position: absolute;
}

/* Menu */
.menubar {
  flex: none;
  height: 24px;
  padding: 2px 7px 0;
  display: flex;
  align-items: center;
  gap: 13px;
  font-family: "Noto Sans CJK KR", sans-serif;
  font-size: 16px;
  line-height: 20px;
}

/* Toolbar */
.toolbar {
  flex: none;
  display: flex;
  background: #f3f3f3;
  border-top: 1px solid #e9e9e9;
  border-bottom: 2px solid #8a8c89;
}
.group {
  display: flex;
  padding: 3px 0;
  border-right: 1px solid #a5a5a5;
}
.grow {
  flex: 1;
}
.grip {
  width: 11px;
  margin: 2px 0;
  background: radial-gradient(circle, #b5b5b5 1px, transparent 2px) center / 5px 5px repeat-y;
}
.group:first-child .grip {
  width: 10px;
}
.tool {
  width: 42px;
  height: 40px;
  display: flex;
  align-items: center;
  justify-content: center;
  border: 1px solid transparent;
}
.tool svg {
  width: 31px;
  height: 31px;
}
.tool.active {
  background: #c5dff5;
  border-color: #92c2ea;
}
.more {
  width: 22px;
  padding-left: 5px;
}
.more svg {
  width: 12px;
  height: 7px;
}
.sep {
  width: 8px;
  border-left: 3px solid transparent;
  background: linear-gradient(#8b8b8b, #8b8b8b) left / 1px 100% no-repeat;
}
.slider {
  flex: 1;
  max-width: 146px;
  margin: 9px 0 0 6px;
}
.slider + .slider {
  margin-left: 15px;
}
.slider input {
  appearance: none;
  display: block;
  width: 100%;
  height: 9px;
  margin: 0 0 4px;
  border: solid #777;
  border-width: 2px 1px 0 2px;
}
.slider input::-webkit-slider-thumb {
  appearance: none;
  width: 4px;
  height: 15px;
  background: #f1f1f1;
  border-right: 1px solid #888;
}
.months {
  background: linear-gradient(90deg, #fffdf0, #f3c04a 35%, #e81616 68%, #f7b8b8 88%, #fff);
}
.hours {
  background: linear-gradient(90deg, #fff, #8fb6dc 35%, #6c7be8 65%, #2e3890 85%, #000);
}
.scale {
  display: flex;
  justify-content: space-between;
  font-family: Roboto, "Noto Sans CJK KR", sans-serif;
  font-size: 10px;
  font-weight: 500;
  line-height: 12px;
}
.letters {
  padding: 0 4px 0 3px;
}

/* Work area */
main {
  flex: 1;
  min-height: 0;
  display: flex;
  position: relative;
}
.palette {
  flex: none;
  width: 88px;
  background: #f1f1f1;
}
.palette-box {
  background: #f4f4f4;
  border: solid #b0b0b0;
  border-width: 0 1px 1px 0;
}
.grip-h {
  display: block;
  height: 8px;
  margin: 0 3px;
  background: radial-gradient(circle, #b5b5b5 1px, transparent 2px) center / 5px 5px repeat-x;
}
.tools {
  display: flex;
  flex-wrap: wrap;
  padding-left: 2px;
}
.tools .tool {
  height: 42px;
}
.tools + .tools {
  margin-top: 2px;
  padding-top: 6px;
  background: linear-gradient(#8b8b8b, #8b8b8b) center top / 80px 1px no-repeat;
}
.viewport {
  flex: 1;
  min-width: 0;
  position: relative;
  background: #cdcdcb;
  border: solid #777;
  border-width: 0 0 1px 2px;
}
.scene {
  width: 100%;
  height: 100%;
}
.keys {
  position: absolute;
  right: 16px;
  bottom: 8px;
  display: flex;
  flex-direction: column;
  align-items: flex-start;
  gap: 26px;
}
.keys kbd {
  padding: 0 5px 2px;
  border-radius: 5px;
  background: #8b8b8a;
  box-shadow: 0 0 4px 3px rgba(150, 150, 150, .35);
  color: #fff;
  font: bold 29px/44px "DejaVu Sans", sans-serif;
}
.shade {
  position: absolute;
  left: 0;
  right: 610px;
  bottom: 1px;
  height: 71px;
  background: rgba(0, 0, 0, .42);
}

/* Tray */
.tray {
  flex: none;
  width: 301px;
  display: flex;
  flex-direction: column;
  padding-left: 2px;
  border-left: 3px solid #fff;
  background: #f1f1f1;
}
.tray-title {
  flex: none;
  height: 26px;
  padding: 0 4px;
  display: flex;
  align-items: center;
  background: linear-gradient(#bfcddd, #d9e6f5);
}
.tray-title h1 {
  flex: 1;
  font-size: 15px;
  line-height: 22px;
  padding-bottom: 2px;
}
.pin svg {
  width: 10px;
  height: 11px;
}
.tray-close {
  width: 12px;
  height: 12px;
  margin-left: 8px;
  padding: 3px;
  background: #c75050;
  color: #fff;
}
.tray-close svg {
  width: 6px;
  height: 6px;
}
.tray-body {
  flex: 1;
  min-height: 0;
  display: flex;
}
.panels {
  flex: 1;
  min-width: 0;
  padding-top: 1px;
  display: flex;
  flex-direction: column;
  border-right: 1px solid #fff;
}
.panel-head {
  flex: none;
  height: 22px;
  padding: 0 3px 0 9px;
  display: flex;
  align-items: center;
  gap: 8px;
  background: linear-gradient(#e9e9e9, #b4b4b4);
  border-top: 1px solid #aaa;
}
.panel-head > svg {
  width: 10px;
  height: 8px;
}
.panel-head h2 {
  flex: 1;
  padding-bottom: 2px;
  font-size: 16px;
  line-height: 19px;
}
.panel-head button {
  width: 16px;
  height: 16px;
  padding: 4px;
  border: 1px solid #999;
  background: #eee;
}
.panel-head button svg {
  width: 6px;
  height: 6px;
}
.entity {
  flex: none;
  height: 182px;
  padding: 0 11px 0 7px;
}
.entity-top {
  height: 33px;
  margin-right: -4px;
  padding: 0 0 0 4px;
  display: flex;
  align-items: center;
  justify-content: space-between;
  background: linear-gradient(#999, #999) left bottom / 240px 1px no-repeat;
}
.entity-top strong {
  font-size: 12px;
  font-weight: 500;
}
.entity-top svg {
  width: 12px;
  height: 18px;
}
.entity-row {
  padding-top: 8px;
  display: flex;
  gap: 2px;
}
.face {
  flex: none;
  width: 35px;
  height: 60px;
  padding: 12px 0;
  border: 1px solid #999;
  background: linear-gradient(45deg, #a5b2bb 50%, #fff 50%) content-box;
}
.fields {
  flex: 1;
  min-width: 0;
  display: grid;
  grid-template-columns: 1fr 117px;
  column-gap: 5px;
  row-gap: 5px;
  align-content: start;
  align-items: center;
  text-align: right;
  white-space: nowrap;
  font-size: 12px;
}
select,
input[type="text"] {
  appearance: none;
  min-width: 0;
  height: 23px;
  margin: 0;
  padding: 0 3px;
  border: solid;
  border-width: 2px 1px 1px 2px;
  border-color: #777 #fff #fff #777;
  border-radius: 0;
  background: #f1f1f1;
  color: #111;
  font: 13px/18px "Noto Sans", "Noto Sans CJK KR", sans-serif;
}
select {
  background: #fff url("data:image/svg+xml,%3Csvg xmlns='http://www.w3.org/2000/svg' width='20' height='20'%3E%3Cpath d='M0 0h20v20H0z' fill='%23f1f1f1'/%3E%3Cpath d='M0 19.500h19.500V0' fill='none' stroke='%23777'/%3E%3Cpath d='M5 8h10l-5 5z'/%3E%3C/svg%3E") right center / 20px 100% no-repeat;
}
.material {
  flex: none;
  display: flex;
  align-items: flex-start;
  gap: 3px;
  padding: 3px 1px 4px 2px;
  border-bottom: 1px solid #999;
}
.preview {
  flex: none;
  width: 77px;
  height: 86px;
  padding: 5px 0;
  border: 1px solid #999;
  background: linear-gradient(45deg, #a5b2bb 50%, #fff 50%) content-box;
}
.material input {
  width: 160px;
  color: #777;
  font-size: 12px;
  line-height: 16px;
}
.material-tools {
  flex: 1;
  display: flex;
  flex-direction: column;
  align-items: flex-end;
}
.collapse {
  width: 12px;
  height: 18px;
  margin: 4px 8px 9px 0;
}
.material-tools button {
  margin: 0 4px 4px 0;
}
.material-tools button svg {
  width: 22px;
  height: 23px;
}
.mini {
  width: 26px;
  height: 26px;
  background: linear-gradient(45deg, #a5b2bb 50%, #fff 50%);
}
.tabs {
  flex: none;
  height: 30px;
  padding-right: 4px;
  display: flex;
  align-items: flex-end;
  font-size: 12px;
}
.tabs button {
  width: 47px;
  height: 20px;
  padding-right: 14px;
  border-right: 1px solid #777;
  border-top: 1px solid #fff;
}
.tabs button:first-child {
  width: 50px;
  height: 22px;
  border-right-width: 2px;
  line-height: 16px;
}
.tabs svg {
  width: 20px;
  height: 20px;
  margin: 0 0 4px auto;
}
.nav {
  flex: none;
  height: 36px;
  padding: 0 3px 2px 6px;
  display: flex;
  align-items: center;
  gap: 8px;
  border-bottom: 1px solid #999;
}
.nav button svg {
  width: 20px;
  height: 20px;
}
.nav button:last-child {
  margin-left: -2px;
}
.nav select {
  flex: 1;
  height: 26px;
  margin: 2px 0 0 -2px;
  font-size: 12px;
}
.nav select.lined {
  background-image: url("data:image/svg+xml,%3Csvg xmlns='http://www.w3.org/2000/svg' width='20' height='20'%3E%3Cpath d='M0 0h20v20H0z' fill='%23f1f1f1'/%3E%3Cpath d='M0 19.500h19.500V0' fill='none' stroke='%23777'/%3E%3Cpath d='M5 8h10l-5 5z'/%3E%3C/svg%3E"), linear-gradient(#111, #111);
  background-position: right center, 3px 21px;
  background-size: 20px 100%, 126px 1px;
}
.list {
  display: flex;
  background: #fff;
  overflow: hidden;
}
.colors {
  flex: 1;
  min-height: 0;
}
.folders {
  flex: none;
  height: 33px;
}
.grid {
  flex: 1;
  padding: 2px 3px;
  display: flex;
  flex-wrap: wrap;
  align-content: flex-start;
  gap: 2px;
}
.swatch {
  width: 62px;
  height: 62px;
  padding: 1px;
  border: 1px solid #999;
  background-clip: content-box;
}
.folders .swatch {
  padding: 0 0 0 13px;
}
.folders svg {
  width: 36px;
  height: 36px;
}
.c1 { background-color: #fbcbcc; }
.c2 { background-color: #f99a9b; }
.c3 { background-color: #f56665; }
.c4 { background-color: #ef3437; }
.c5 { background-color: #ee0000; }
.c6 { background-color: #cb0000; }
.c7 { background-color: #980000; }
.c8 { background-color: #670000; }
.c9 { background-color: #fcd8cc; }
.c10 { background-color: #f9b199; }
.c11 { background-color: #f98f69; }
.c12 { background-color: #f66a33; }
.c13 { background-color: #f24405; }
.c14 { background-color: #cd3106; }
.c15 { background-color: #992607; }
.c16 { background-color: #671b03; }
.c17 { background-color: #fee5cc; }
.c18 { background-color: #fbcb98; }
.scroll {
  flex: none;
  width: 19px;
  padding: 6px 0;
  display: flex;
  flex-direction: column;
  align-items: center;
  background: #f1f1f1;
}
.scroll svg {
  flex: none;
  width: 12px;
  height: 8px;
}
.scroll span {
  width: 100%;
  height: 20px;
  margin-top: 7px;
  background: #cdcdcd;
}
.scroll svg:last-child {
  margin-top: auto;
}
.outer {
  width: 21px;
  padding-top: 8px;
}
.splitter {
  flex: none;
  height: 9px;
  background: linear-gradient(#f1f1f1 3px, #777 3px, #777 5px, #f1f1f1 5px);
}
.panels h3 {
  flex: none;
  height: 23px;
  padding-left: 4px;
  border: solid #999;
  border-width: 1px 0;
  background: #e4e4e5;
  font-size: 12px;
  line-height: 20px;
}

/* Status bar */
.status {
  flex: none;
  height: 27px;
  padding: 0 6px 0 5px;
  display: flex;
  align-items: center;
  gap: 15px;
  overflow: hidden;
  background: #f1f1f1;
  font-size: 16px;
}
.status svg {
  width: 20px;
  height: 20px;
  margin-top: 5px;
}
.status p {
  flex: 1;
  margin: 6px 0 0 -3px;
  padding-left: 11px;
  border-left: 1px solid #888;
  font-family: "Noto Sans CJK KR", sans-serif;
  font-size: 17px;
  line-height: 18px;
}
.status label {
  margin-top: 6px;
  padding-left: 11px;
  border-left: 1px solid #888;
  line-height: 18px;
}
.status input[type="text"] {
  align-self: flex-start;
  width: 250px;
  height: 32px;
  margin: 2px 0 0 -5px;
  border: 1px solid #a9b8c4;
  background: #fff;
  font-size: 16px;
}
```
